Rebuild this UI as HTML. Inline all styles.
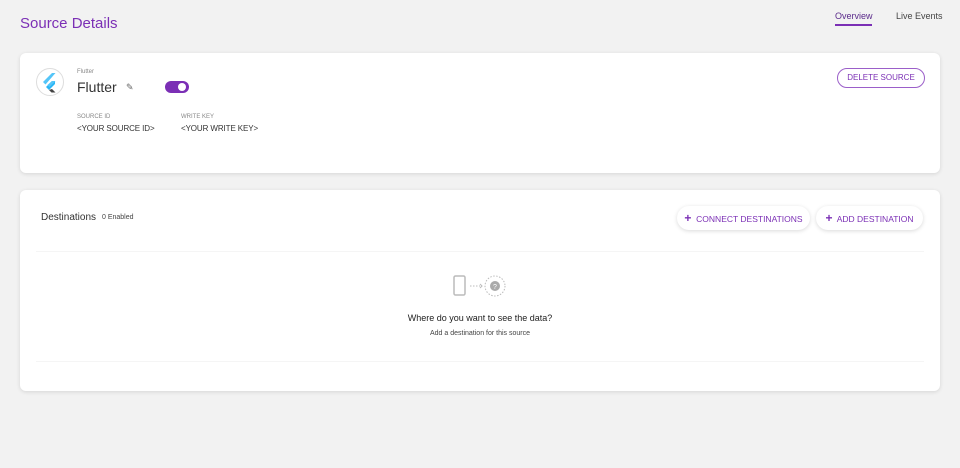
<!DOCTYPE html>
<html><head><style>
body{margin:0;width:960px;height:468px;background:#f2f2f2;font-family:"Liberation Sans",sans-serif;position:relative;overflow:hidden;color:#333}
.a{position:absolute}
.card{position:absolute;background:#fff;border-radius:6px;box-shadow:0 1px 4px rgba(0,0,0,.12)}
.btn{position:absolute;height:24px;border-radius:13px;background:#fff;box-shadow:0 1px 4px rgba(0,0,0,.15);color:#7b2fb5;font-size:8.5px;line-height:24px;text-align:center}
</style></head><body>
<div class="a" style="left:20px;top:15px;font-size:15px;color:#7b2fb5">Source Details</div>
<div class="a" style="left:835px;top:11px;font-size:9px;color:#5a2a8a">Overview</div>
<div class="a" style="left:835px;top:24px;width:37px;height:2px;background:#7b2fb5"></div>
<div class="a" style="left:896px;top:11px;font-size:9px;color:#444">Live Events</div>

<div class="card" style="left:20px;top:53px;width:920px;height:120px">
 <div class="a" style="left:16px;top:15px;width:26px;height:26px;border-radius:50%;border:1px solid #ddd">
  <svg width="26" height="26" viewBox="0 0 26 26"><path d="M15 4L6 13l2.5 2.5L18.5 4z" fill="#54c5f8"/><path d="M15 12l-6 6 3 3 6-6V12z" fill="#29b6f6"/><path d="M15 12h3.5l-6 6-2-2z" fill="#54c5f8"/><path d="M12 21l2.5 2.5h4L15 20z" fill="#444"/></svg>
 </div>
 <div class="a" style="left:57px;top:16px;font-size:6px;color:#888">Flutter</div>
 <div class="a" style="left:57px;top:26px;font-size:14px;color:#333">Flutter</div>
 <div class="a" style="left:106px;top:29px;font-size:9px;color:#666">✎</div>
 <div class="a" style="left:145px;top:28px;width:24px;height:12px;border-radius:6px;background:#7b2fb5"><div class="a" style="left:13px;top:2px;width:8px;height:8px;border-radius:50%;background:#fff"></div></div>
 <div class="a" style="left:57px;top:61px;font-size:6px;color:#888">SOURCE ID</div>
 <div class="a" style="left:57px;top:71px;font-size:8px;color:#333;letter-spacing:-.1px">&lt;YOUR SOURCE ID&gt;</div>
 <div class="a" style="left:161px;top:61px;font-size:6px;color:#888">WRITE KEY</div>
 <div class="a" style="left:161px;top:71px;font-size:8px;color:#333;letter-spacing:-.1px">&lt;YOUR WRITE KEY&gt;</div>
 <div class="a" style="left:817px;top:15px;width:86px;height:18px;border:1px solid #9b5fc9;border-radius:10px;color:#7b2fb5;font-size:8px;line-height:18px;text-align:center">DELETE SOURCE</div>
</div>

<div class="card" style="left:20px;top:190px;width:920px;height:201px">
 <div class="a" style="left:21px;top:22px;font-size:10px;color:#333">Destinations</div>
 <div class="a" style="left:82px;top:24px;font-size:7px;color:#444">0 Enabled</div>
 <div class="btn" style="left:657px;top:16px;width:133px"><b style="font-size:12px">+</b>&nbsp; CONNECT DESTINATIONS</div>
 <div class="btn" style="left:796px;top:16px;width:107px"><b style="font-size:12px">+</b>&nbsp; ADD DESTINATION</div>
 <div class="a" style="left:16px;top:61px;width:888px;height:1px;background:#f5f5f5"></div>
 <div class="a" style="left:16px;top:171px;width:888px;height:1px;background:#f5f5f5"></div>
 <svg class="a" style="left:432px;top:84px" width="56" height="24"><rect x="2" y="2" width="11" height="19" rx="1.5" fill="none" stroke="#bbb" stroke-width="1.5"/><path d="M18 12h10" stroke="#bbb" stroke-dasharray="1.5 1.5"/><path d="M28 10l2 2-2 2" fill="none" stroke="#bbb"/><circle cx="43" cy="12" r="10" fill="none" stroke="#bbb" stroke-dasharray="1.5 1.5"/><circle cx="43" cy="12" r="5" fill="#aaa"/><text x="43" y="15" font-size="7" fill="#fff" text-anchor="middle" font-family="Liberation Sans">?</text></svg>
 <div class="a" style="left:0;width:920px;top:123px;text-align:center;font-size:9px;color:#222">Where do you want to see the data?</div>
 <div class="a" style="left:0;width:920px;top:140px;text-align:center;font-size:7px;color:#444">Add a destination for this source</div>
</div>
</body></html>
